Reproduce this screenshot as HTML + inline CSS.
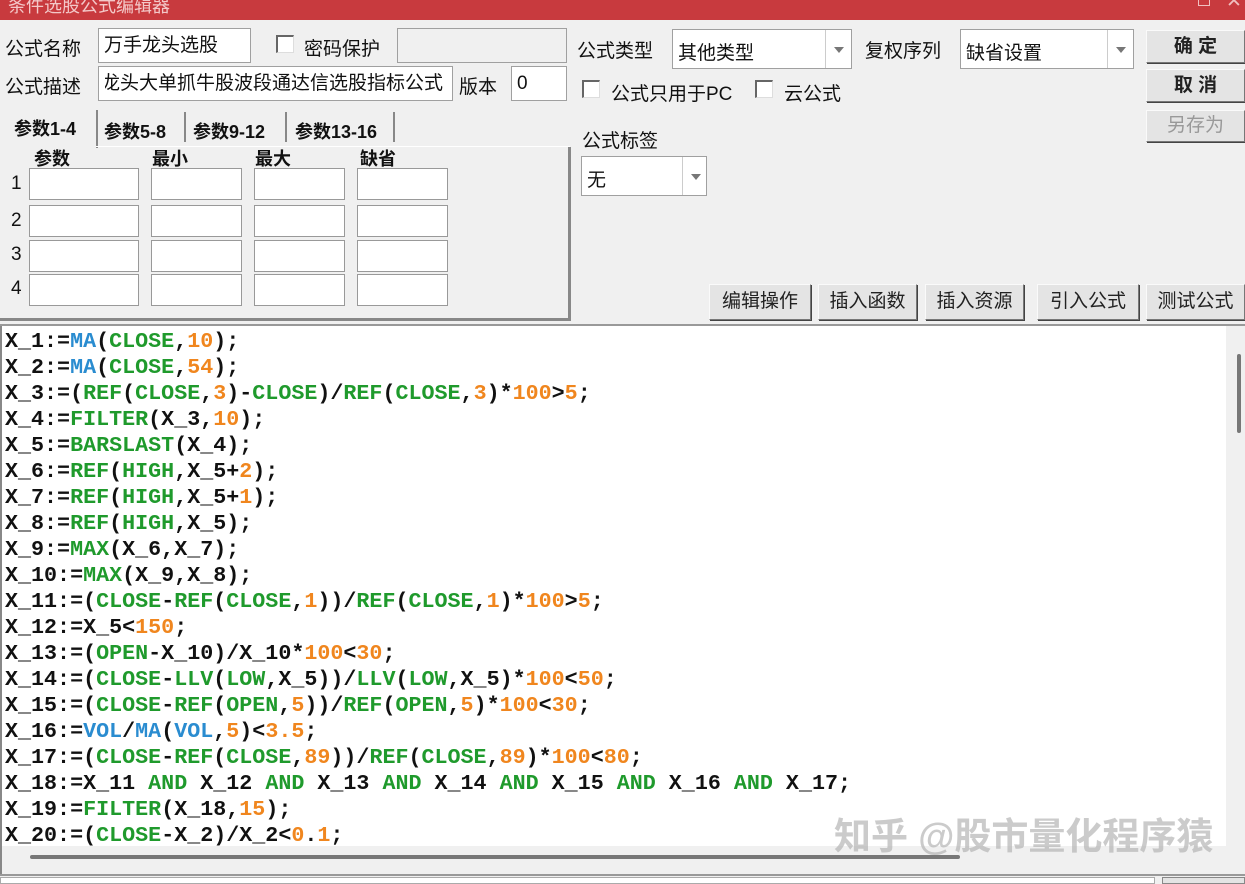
<!DOCTYPE html>
<html><head><meta charset="utf-8">
<style>
*{box-sizing:border-box;margin:0;padding:0}
body{width:1245px;height:884px;overflow:hidden;background:#f0f0f0;position:relative;font-family:"Liberation Sans","Noto Sans CJK SC",sans-serif;font-size:19px;color:#111}
.a{position:absolute}
.lbl{position:absolute;font-size:19px;white-space:nowrap}
.inp{position:absolute;background:#fff;border:1px solid #a0a0a0;font-size:19px;padding-left:5px;white-space:nowrap;overflow:hidden}
.cb{position:absolute;width:18px;height:18px;border:2px solid #666;border-right:1px solid #ddd;border-bottom:1px solid #ddd;background:#fff}
.btn{position:absolute;background:#e4e4e4;border:1px solid #777;border-top-color:#fafafa;border-left-color:#fafafa;box-shadow:1px 1px 0 #444;font-size:19px;text-align:center;font-weight:bold;color:#222}
.dd{position:absolute;background:#fff;border:1px solid #a0a0a0}
.dd .ar{position:absolute;right:0;top:0;bottom:0;width:26px;border-left:1px solid #ccc}
.dd .ar:after{content:"";position:absolute;left:8px;top:50%;margin-top:-2px;border-left:5px solid transparent;border-right:5px solid transparent;border-top:6px solid #777}
.cell{position:absolute;background:#fff;border:1px solid #999}
#code{position:absolute;left:0;top:326px;width:1226px;height:520px;background:#fff;overflow:hidden;border-left:2px solid #888}
#code pre{font-family:"Liberation Mono",monospace;font-weight:bold;font-size:21.7px;line-height:26px;padding:3px 0 0 3px;color:#111}
.g{color:#1f9a2c}.b{color:#2a8cd0}.o{color:#f0861e}
</style></head><body>
<div class="a" style="left:0;top:0;width:1245px;height:20px;background:#c83a3e"></div>
<div class="lbl" style="left:8px;top:-8px;color:#f3c8c8;font-size:18px">条件选股公式编辑器</div>
<div class="a" style="left:1198px;top:-6px;width:12px;height:12px;border:1px solid #f0c0c0"></div>
<div class="lbl" style="left:1226px;top:-10px;color:#f0c0c0">✕</div>

<div class="lbl" style="left:5px;top:34px">公式名称</div>
<div class="inp" style="left:98px;top:28px;width:153px;height:35px;line-height:33px">万手龙头选股</div>
<div class="cb" style="left:276px;top:35px"></div>
<div class="lbl" style="left:304px;top:34px">密码保护</div>
<div class="inp" style="left:397px;top:28px;width:170px;height:35px;background:#f0f0f0"></div>

<div class="lbl" style="left:5px;top:72px">公式描述</div>
<div class="inp" style="left:98px;top:66px;width:355px;height:35px;line-height:33px;padding-left:2px">龙头大单抓牛股波段通达信选股指标公式</div>
<div class="a" style="left:99px;top:67px;width:6px;height:33px;background:#fff"></div>
<div class="lbl" style="left:459px;top:72px">版本</div>
<div class="inp" style="left:511px;top:66px;width:56px;height:35px;line-height:33px">0</div>

<div class="lbl" style="left:14px;top:115px;font-weight:bold;font-size:18px">参数1-4</div>
<div class="a" style="left:96px;top:110px;width:2px;height:38px;background:#888"></div>
<div class="lbl" style="left:104px;top:118px;font-weight:bold;font-size:18px">参数5-8</div>
<div class="a" style="left:184px;top:112px;width:2px;height:30px;background:#888"></div>
<div class="lbl" style="left:193px;top:118px;font-weight:bold;font-size:18px">参数9-12</div>
<div class="a" style="left:285px;top:112px;width:2px;height:30px;background:#888"></div>
<div class="lbl" style="left:295px;top:118px;font-weight:bold;font-size:18px">参数13-16</div>
<div class="a" style="left:393px;top:112px;width:2px;height:30px;background:#888"></div>
<div class="a" style="left:96px;top:146px;width:474px;height:1px;background:#fff"></div>
<div class="a" style="left:568px;top:147px;width:3px;height:173px;background:#888"></div>
<div class="a" style="left:0;top:318px;width:571px;height:3px;background:#888"></div>

<div class="lbl" style="left:34px;top:145px;font-weight:bold;font-size:18px">参数</div>
<div class="lbl" style="left:152px;top:145px;font-weight:bold;font-size:18px">最小</div>
<div class="lbl" style="left:255px;top:145px;font-weight:bold;font-size:18px">最大</div>
<div class="lbl" style="left:360px;top:145px;font-weight:bold;font-size:18px">缺省</div>

<div class="lbl" style="left:11px;top:173px">1</div>
<div class="lbl" style="left:11px;top:210px">2</div>
<div class="lbl" style="left:11px;top:244px">3</div>
<div class="lbl" style="left:11px;top:278px">4</div>

<div class="cell" style="left:29px;top:168px;width:110px;height:32px"></div><div class="cell" style="left:151px;top:168px;width:91px;height:32px"></div><div class="cell" style="left:254px;top:168px;width:91px;height:32px"></div><div class="cell" style="left:357px;top:168px;width:91px;height:32px"></div>
<div class="cell" style="left:29px;top:205px;width:110px;height:32px"></div><div class="cell" style="left:151px;top:205px;width:91px;height:32px"></div><div class="cell" style="left:254px;top:205px;width:91px;height:32px"></div><div class="cell" style="left:357px;top:205px;width:91px;height:32px"></div>
<div class="cell" style="left:29px;top:240px;width:110px;height:32px"></div><div class="cell" style="left:151px;top:240px;width:91px;height:32px"></div><div class="cell" style="left:254px;top:240px;width:91px;height:32px"></div><div class="cell" style="left:357px;top:240px;width:91px;height:32px"></div>
<div class="cell" style="left:29px;top:274px;width:110px;height:32px"></div><div class="cell" style="left:151px;top:274px;width:91px;height:32px"></div><div class="cell" style="left:254px;top:274px;width:91px;height:32px"></div><div class="cell" style="left:357px;top:274px;width:91px;height:32px"></div>

<div class="lbl" style="left:577px;top:36px">公式类型</div>
<div class="dd" style="left:672px;top:29px;width:180px;height:40px"><span class="lbl" style="left:5px;top:8px">其他类型</span><div class="ar"></div></div>
<div class="lbl" style="left:865px;top:36px">复权序列</div>
<div class="dd" style="left:960px;top:29px;width:174px;height:40px"><span class="lbl" style="left:5px;top:8px">缺省设置</span><div class="ar"></div></div>
<div class="cb" style="left:582px;top:80px"></div>
<div class="lbl" style="left:611px;top:79px">公式只用于PC</div>
<div class="cb" style="left:755px;top:80px"></div>
<div class="lbl" style="left:784px;top:79px">云公式</div>
<div class="lbl" style="left:582px;top:126px">公式标签</div>
<div class="dd" style="left:581px;top:156px;width:126px;height:40px"><span class="lbl" style="left:5px;top:8px">无</span><div class="ar" style="width:24px"></div></div>

<div class="btn" style="left:1146px;top:30px;width:99px;height:33px;line-height:31px">确 定</div>
<div class="btn" style="left:1146px;top:69px;width:99px;height:33px;line-height:31px">取 消</div>
<div class="btn" style="left:1146px;top:110px;width:99px;height:32px;line-height:30px;color:#999;font-weight:normal">另存为</div>

<div class="btn" style="left:709px;top:284px;width:102px;height:36px;line-height:34px;font-weight:normal">编辑操作</div>
<div class="btn" style="left:818px;top:284px;width:99px;height:36px;line-height:34px;font-weight:normal">插入函数</div>
<div class="btn" style="left:925px;top:284px;width:99px;height:36px;line-height:34px;font-weight:normal">插入资源</div>
<div class="btn" style="left:1037px;top:284px;width:102px;height:36px;line-height:34px;font-weight:normal">引入公式</div>
<div class="btn" style="left:1146px;top:284px;width:99px;height:36px;line-height:34px;font-weight:normal">测试公式</div>

<div class="a" style="left:0;top:324px;width:1245px;height:2px;background:#999"></div>
<div id="code"><pre>X_1:=<span class="b">MA</span>(<span class="g">CLOSE</span>,<span class="o">10</span>);
X_2:=<span class="b">MA</span>(<span class="g">CLOSE</span>,<span class="o">54</span>);
X_3:=(<span class="g">REF</span>(<span class="g">CLOSE</span>,<span class="o">3</span>)-<span class="g">CLOSE</span>)/<span class="g">REF</span>(<span class="g">CLOSE</span>,<span class="o">3</span>)*<span class="o">100</span>&gt;<span class="o">5</span>;
X_4:=<span class="g">FILTER</span>(X_3,<span class="o">10</span>);
X_5:=<span class="g">BARSLAST</span>(X_4);
X_6:=<span class="g">REF</span>(<span class="g">HIGH</span>,X_5+<span class="o">2</span>);
X_7:=<span class="g">REF</span>(<span class="g">HIGH</span>,X_5+<span class="o">1</span>);
X_8:=<span class="g">REF</span>(<span class="g">HIGH</span>,X_5);
X_9:=<span class="g">MAX</span>(X_6,X_7);
X_10:=<span class="g">MAX</span>(X_9,X_8);
X_11:=(<span class="g">CLOSE</span>-<span class="g">REF</span>(<span class="g">CLOSE</span>,<span class="o">1</span>))/<span class="g">REF</span>(<span class="g">CLOSE</span>,<span class="o">1</span>)*<span class="o">100</span>&gt;<span class="o">5</span>;
X_12:=X_5&lt;<span class="o">150</span>;
X_13:=(<span class="g">OPEN</span>-X_10)/X_10*<span class="o">100</span>&lt;<span class="o">30</span>;
X_14:=(<span class="g">CLOSE</span>-<span class="g">LLV</span>(<span class="g">LOW</span>,X_5))/<span class="g">LLV</span>(<span class="g">LOW</span>,X_5)*<span class="o">100</span>&lt;<span class="o">50</span>;
X_15:=(<span class="g">CLOSE</span>-<span class="g">REF</span>(<span class="g">OPEN</span>,<span class="o">5</span>))/<span class="g">REF</span>(<span class="g">OPEN</span>,<span class="o">5</span>)*<span class="o">100</span>&lt;<span class="o">30</span>;
X_16:=<span class="b">VOL</span>/<span class="b">MA</span>(<span class="b">VOL</span>,<span class="o">5</span>)&lt;<span class="o">3.5</span>;
X_17:=(<span class="g">CLOSE</span>-<span class="g">REF</span>(<span class="g">CLOSE</span>,<span class="o">89</span>))/<span class="g">REF</span>(<span class="g">CLOSE</span>,<span class="o">89</span>)*<span class="o">100</span>&lt;<span class="o">80</span>;
X_18:=X_11 <span class="g">AND</span> X_12 <span class="g">AND</span> X_13 <span class="g">AND</span> X_14 <span class="g">AND</span> X_15 <span class="g">AND</span> X_16 <span class="g">AND</span> X_17;
X_19:=<span class="g">FILTER</span>(X_18,<span class="o">15</span>);
X_20:=(<span class="g">CLOSE</span>-X_2)/X_2&lt;<span class="o">0</span>.<span class="o">1</span>;</pre></div>
<div class="a" style="left:1226px;top:326px;width:19px;height:520px;background:#f0f0f0"></div>
<div class="a" style="left:1237px;top:354px;width:4px;height:79px;background:#777;border-radius:2px"></div>
<div class="a" style="left:0;top:846px;width:1245px;height:28px;background:#f0f0f0;border-left:2px solid #888"></div>
<div class="a" style="left:30px;top:855px;width:930px;height:4px;background:#777;border-radius:2px"></div>
<div class="a" style="left:0;top:874px;width:1245px;height:2px;background:#999"></div>
<div class="a" style="left:0;top:877px;width:1155px;height:7px;background:#fff;border:1px solid #aaa"></div>
<div class="a" style="left:1162px;top:877px;width:83px;height:7px;border:1px solid #888;background:#e4e4e4"></div>
<div class="lbl" style="left:834px;top:806px;font-size:37px;font-weight:bold;color:rgba(175,175,175,0.65);z-index:5">知乎 @股市量化程序猿</div>
</body></html>
